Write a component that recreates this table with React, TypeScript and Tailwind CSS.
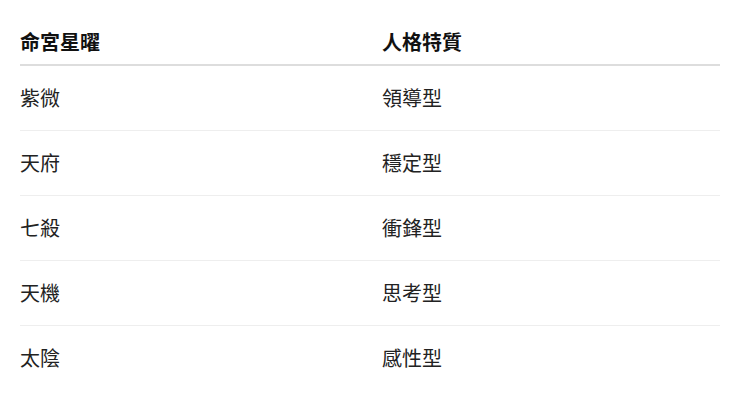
const ROWS: [string, string][] = [
  ['紫微', '領導型'],
  ['天府', '穩定型'],
  ['七殺', '衝鋒型'],
  ['天機', '思考型'],
  ['太陰', '感性型'],
];

export default function App() {
  return (
    <div
      className="w-[740px] h-[404px] bg-white px-5 pt-5 overflow-hidden"
      style={{ fontFamily: '"Noto Sans CJK TC", "Noto Sans", sans-serif' }}
    >
      <table className="w-full border-collapse text-left">
        <thead>
          <tr className="border-b-2 border-[#dddddd]">
            <th className="w-1/2 pr-3 py-2 text-[20px] leading-[28px] font-bold text-[#111111]">命宮星曜</th>
            <th className="w-1/2 pl-3 py-2 text-[20px] leading-[28px] font-bold text-[#111111]">人格特質</th>
          </tr>
        </thead>
        <tbody>
          {ROWS.map(([star, trait], i) => (
            <tr key={star} className={i < ROWS.length - 1 ? 'border-b border-[#eeeeee]' : ''}>
              <td className="pr-3 py-[18px] text-[20px] leading-[28px] text-[#222222]">{star}</td>
              <td className="pl-3 py-[18px] text-[20px] leading-[28px] text-[#222222]">{trait}</td>
            </tr>
          ))}
        </tbody>
      </table>
    </div>
  );
}
